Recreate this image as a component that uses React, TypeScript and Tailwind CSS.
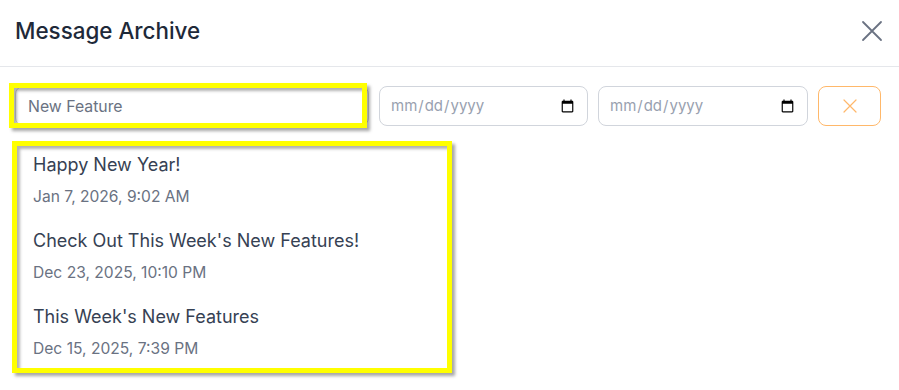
import React from "react";

const messages = [
  { title: "Happy New Year!", date: "Jan 7, 2026, 9:02 AM" },
  { title: "Check Out This Week's New Features!", date: "Dec 23, 2025, 10:10 PM" },
  { title: "This Week's New Features", date: "Dec 15, 2025, 7:39 PM" },
];

// yellow annotation frame drawn over the screenshot
const Highlight: React.FC<{ className: string }> = ({ className }) => (
  <div
    className={`pointer-events-none absolute border-[5px] border-[#ffff00] shadow-[3px_3px_3px_rgba(0,0,0,0.35),inset_3px_3px_3px_rgba(0,0,0,0.3)] ${className}`}
  />
);

export default function App() {
  return (
    <div
      className="h-[390px] w-[899px] overflow-hidden bg-white"
      style={{ fontFamily: "Inter, 'Noto Sans', sans-serif" }}
    >
      <div className="flex h-[67px] items-center justify-between border-b border-gray-200 pb-[4px] pl-[15px] pr-[16px]">
        <h2 className="text-[22.4px] font-medium text-gray-800">Message Archive</h2>
        <button className="text-gray-500">
          <svg width="22" height="22" viewBox="0 0 22 22" fill="none" stroke="currentColor" strokeWidth="1.8" strokeLinecap="round">
            <path d="M2 2L20 20M20 2L2 20" />
          </svg>
        </button>
      </div>

      <div className="flex gap-[10px] pl-[15px] pt-[19px]">
        <div className="relative">
          <input
            type="text"
            defaultValue="New Feature"
            className="h-[40px] w-[354px] rounded-lg border border-gray-300 px-3 text-[15.8px] text-gray-500 outline-none"
          />
          <Highlight className="-left-[6px] -top-[3px] -bottom-[2px] right-[2px]" />
        </div>
        <input
          type="date"
          className="h-[40px] w-[209px] rounded-lg border border-gray-300 px-[10px] text-[15px] text-gray-400 outline-none"
        />
        <input
          type="date"
          className="h-[40px] w-[210px] rounded-lg border border-gray-300 px-[10px] text-[15px] text-gray-400 outline-none"
        />
        <button className="flex h-[40px] w-[63px] items-center justify-center rounded-lg border border-orange-300 text-orange-300">
          <svg width="14" height="14" viewBox="0 0 14 14" fill="none" stroke="currentColor" strokeWidth="1.2" strokeLinecap="round">
            <path d="M1 1L13 13M13 1L1 13" />
          </svg>
        </button>
      </div>

      <div className="relative ml-[16px] mt-[16px] w-[430px]">
        {messages.map((m) => (
          <div key={m.date} className="flex flex-col gap-[10px] px-[17px] py-[11px]">
            <div className="text-[18px] leading-6 text-gray-700">{m.title}</div>
            <div className="text-[15.6px] leading-5 text-gray-500">{m.date}</div>
          </div>
        ))}
        <Highlight className="-left-[4px] -top-[1px] -right-[6px] -bottom-[3px]" />
      </div>
    </div>
  );
}
